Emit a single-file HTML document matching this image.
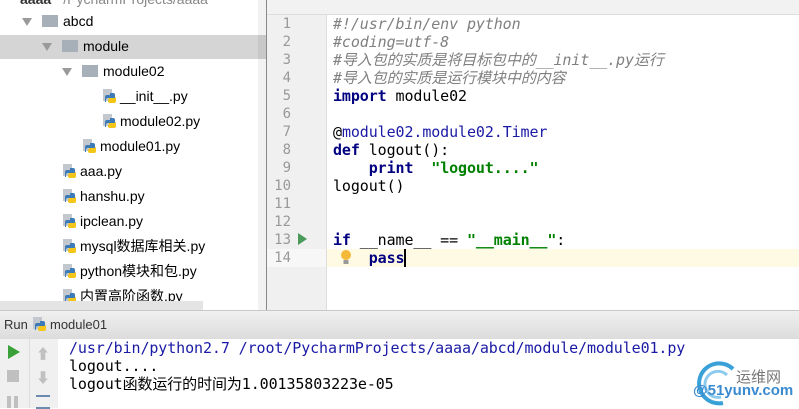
<!DOCTYPE html><html><head><meta charset="utf-8"><style>
body{margin:0;width:799px;height:408px;overflow:hidden;background:#fff;position:relative;font-family:"Liberation Sans","Noto Sans CJK SC",sans-serif}
.a{position:absolute}
.row{position:absolute;font-size:14px;color:#000;height:25px;line-height:25px;white-space:nowrap}
.code{position:absolute;left:333px;font-family:"DejaVu Sans Mono","Noto Sans CJK SC",monospace;font-size:15px;letter-spacing:-0.1px;white-space:pre;line-height:18px}
.ln{position:absolute;left:267px;width:24px;text-align:right;font-family:"DejaVu Sans Mono",monospace;font-size:14px;color:#999;line-height:18px}
.cm{color:#808080;font-style:italic}.kw{color:#000080;font-weight:bold}.st{color:#008000;font-weight:bold}.bl{color:#1a1aa6}
.py{display:inline-block;width:14px;height:14px;vertical-align:-2px;margin-right:3px;position:relative}
.fd{display:inline-block;width:16px;height:12px;background:#a7b0b8;vertical-align:-1px;margin-right:5px}
.tri{display:inline-block;width:0;height:0;border-left:5px solid transparent;border-right:5px solid transparent;border-top:8px solid #9a9a9a;margin-right:10px}
.con{position:absolute;left:69px;font-family:"DejaVu Sans Mono","Noto Sans CJK SC",monospace;font-size:15px;letter-spacing:-0.1px;white-space:pre;line-height:18px}
</style></head><body>
<svg width="0" height="0" style="position:absolute"><defs><g id="p"><rect x="0" y="0" width="9" height="12" fill="#c2c8ce"/><path d="M7 4h3a2 2 0 0 1 2 2v3H5a2 2 0 0 0-2 2v2H2a2 2 0 0 1-0-1V8a2 2 0 0 1 2-2h3z" fill="#3d7ab8"/><path d="M6 9h5a2 2 0 0 0 2-2v5a2 2 0 0 1-2 2H7a2 2 0 0 1-2-2z" fill="#f5c518"/></g></defs></svg>
<div class="a" style="left:0;top:0;width:258px;height:310px;background:#fff"></div>
<div class="a" style="left:0;top:35px;width:266px;height:24px;background:#d5d5d5"></div>
<div class="a" style="left:258px;top:0;width:8px;height:310px;background:#f2f2f2"></div>
<div class="a" style="left:258px;top:35px;width:8px;height:24px;background:#c8c8c8"></div>
<div class="row" style="left:20px;top:-13px;color:#333;font-weight:bold">aaaa <span style="font-weight:normal;color:#888">~/PycharmProjects/aaaa</span></div>
<div class="row" style="left:22px;top:9px"><span class="tri"></span><span class="fd"></span>abcd</div>
<div class="row" style="left:42px;top:34px"><span class="tri"></span><span class="fd"></span>module</div>
<div class="row" style="left:62px;top:59px"><span class="tri"></span><span class="fd"></span>module02</div>
<div class="row" style="left:103px;top:84px"><svg class="py"><use href="#p"/></svg>__init__.py</div>
<div class="row" style="left:103px;top:109px"><svg class="py"><use href="#p"/></svg>module02.py</div>
<div class="row" style="left:83px;top:134px"><svg class="py"><use href="#p"/></svg>module01.py</div>
<div class="row" style="left:63px;top:159px"><svg class="py"><use href="#p"/></svg>aaa.py</div>
<div class="row" style="left:63px;top:184px"><svg class="py"><use href="#p"/></svg>hanshu.py</div>
<div class="row" style="left:63px;top:209px"><svg class="py"><use href="#p"/></svg>ipclean.py</div>
<div class="row" style="left:63px;top:234px"><svg class="py"><use href="#p"/></svg>mysql数据库相关.py</div>
<div class="row" style="left:63px;top:259px"><svg class="py"><use href="#p"/></svg>python模块和包.py</div>
<div class="row" style="left:63px;top:284px;height:20px;overflow:hidden"><svg class="py"><use href="#p"/></svg>内置高阶函数.py</div>
<div class="a" style="left:0;top:301px;width:203px;height:9px;background:#e4e4e4"></div>
<div class="a" style="left:266px;top:0;width:1px;height:310px;background:#888"></div>
<div class="a" style="left:267px;top:0;width:532px;height:14px;background:#f2f2f2;border-bottom:1px solid #ddd"></div>
<div class="a" style="left:267px;top:15px;width:59px;height:295px;background:#f0f0f0"></div>
<div class="a" style="left:326px;top:15px;width:1px;height:295px;background:#ddd"></div>
<div class="a" style="left:327px;top:249px;width:472px;height:18px;background:#fffae3"></div>
<div class="a" style="left:267px;top:249px;width:59px;height:18px;background:#f7f7f7"></div>
<div class="ln" style="top:15px">1<br>2<br>3<br>4<br>5<br>6<br>7<br>8<br>9<br>10<br>11<br>12<br>13<br>14</div>
<svg class="a" style="left:298px;top:233px" width="9" height="12"><path d="M0 0L9 6L0 12Z" fill="#4a9a5a"/></svg>
<svg class="a" style="left:340px;top:249px" width="12" height="16"><circle cx="6" cy="6" r="5" fill="#f5b93a"/><rect x="3.5" y="11" width="5" height="4" fill="#999"/></svg>
<div class="code" style="top:15px"><span class="cm">#!/usr/bin/env python</span>
<span class="cm">#coding=utf-8</span>
<span class="cm">#导入包的实质是将目标包中的__init__.py运行</span>
<span class="cm">#导入包的实质是运行模块中的内容</span>
<span class="kw">import</span> module02

@<span class="bl">module02.module02.Timer</span>
<span class="kw">def</span> logout():
    <span class="kw">print</span>  <span class="st">"logout...."</span>
logout()


<span class="kw">if</span> __name__ == <span class="st">"__main__"</span>:
    <span class="kw">pass</span><span style="border-left:2px solid #000"></span></div>
<div class="a" style="left:0;top:310px;width:799px;height:28px;background:linear-gradient(#f0f0f0,#dcdcdc);border-top:1px solid #c8c8c8"></div>
<div class="a" style="left:4px;top:317px;font-size:13px;color:#333">Run</div>
<svg class="a" style="left:33px;top:317px" width="14" height="14"><use href="#p"/></svg>
<div class="a" style="left:50px;top:317px;font-size:13px;color:#333">module01</div>
<div class="a" style="left:0;top:339px;width:58px;height:69px;background:#f0f0f0"></div>
<div class="a" style="left:29px;top:339px;width:1px;height:69px;background:#ddd"></div>
<svg class="a" style="left:7px;top:344px" width="14" height="16"><path d="M1 1L13 8L1 15Z" fill="#3aa03a"/></svg>
<div class="a" style="left:7px;top:370px;width:12px;height:12px;background:#c0c0c0"></div>
<div class="a" style="left:7px;top:396px;width:4px;height:12px;background:#c0c0c0"></div><div class="a" style="left:14px;top:396px;width:4px;height:12px;background:#c0c0c0"></div>
<div class="a" style="left:36px;top:344px;color:#c0c0c0;font-size:14px">⬆</div>
<div class="a" style="left:36px;top:368px;color:#c0c0c0;font-size:14px">⬇</div>
<div class="a" style="left:36px;top:395px;width:14px;height:10px;border-top:2px solid #6a8ab0;border-bottom:2px solid #6a8ab0"></div>
<div class="con" style="top:339px;color:#1a1aa6">/usr/bin/python2.7 /root/PycharmProjects/aaaa/abcd/module/module01.py</div>
<div class="con" style="top:357px">logout....</div>
<div class="con" style="top:375px">logout函数运行的时间为1.00135803223e-05</div>
<svg class="a" style="left:693px;top:361px" width="45" height="45"><path d="M40 8A20 20 0 1 0 30 42" fill="none" stroke="#3aa0d8" stroke-width="4"/><path d="M34 14A13 13 0 1 0 28 36" fill="none" stroke="#8ccbee" stroke-width="3"/></svg>
<div class="a" style="left:736px;top:366px;font-size:15px;color:#777">运维网</div>
<div class="a" style="left:693px;top:382px;font-size:15px;color:#3a8ad0;font-weight:bold">@51yunv.com</div>
</body></html>
